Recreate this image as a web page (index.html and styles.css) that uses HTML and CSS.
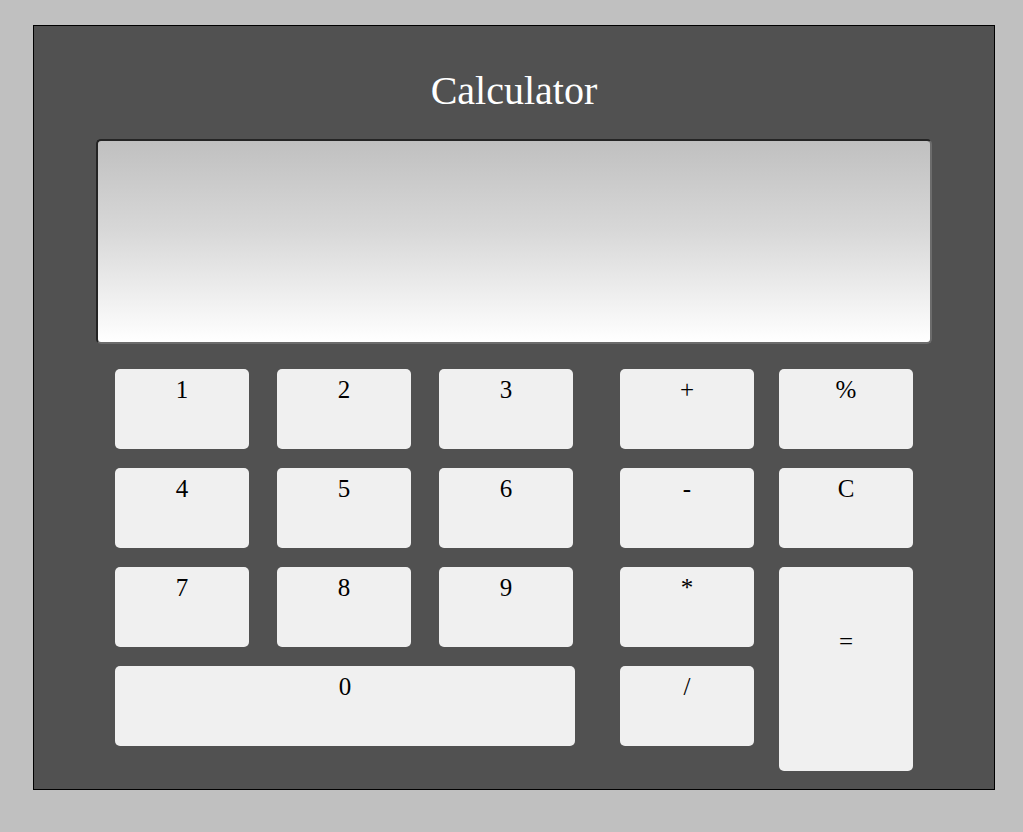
FILE: index.html
```html
<!DOCTYPE html>
<html>
<head>
<meta charset="utf-8">
<title>Calculator</title>
<link rel="stylesheet" href="styles.css">
</head>
<body>
<div class="calc">
  <h1 class="title">Calculator</h1>
  <div class="display"></div>
  <div class="keys">
    <div class="key">1</div>
    <div class="key">2</div>
    <div class="key">3</div>
    <div class="key">+</div>
    <div class="key">%</div>
    <div class="key">4</div>
    <div class="key">5</div>
    <div class="key">6</div>
    <div class="key">-</div>
    <div class="key">C</div>
    <div class="key">7</div>
    <div class="key">8</div>
    <div class="key">9</div>
    <div class="key">*</div>
    <div class="key key-eq">=</div>
    <div class="key key-zero">0</div>
    <div class="key">/</div>
  </div>
</div>
</body>
</html>
```

FILE: styles.css
```css
html, body {
  margin: 0;
  padding: 0;
}
body {
  background: #c0c0c0;
  font-family: "Liberation Serif", "Times New Roman", serif;
  padding: 25px 0 0 33px;
  height: 832px;
  box-sizing: border-box;
}
.calc {
  width: 960px;
  height: 763px;
  background: #515151;
  border: 1px solid #000;
  box-sizing: content-box;
}
.title {
  margin: 43px 0 0 0;
  font-size: 40px;
  line-height: 44px;
  font-weight: normal;
  color: #fff;
  text-align: center;
}
.display {
  margin: 26px 0 0 62px;
  width: 836px;
  height: 205px;
  box-sizing: border-box;
  border-style: solid;
  border-width: 2px;
  border-color: #242424 #6c6c6c #6c6c6c #242424;
  border-radius: 5px;
  background: linear-gradient(to bottom, #c0c0c0 0%, #d8d8d8 45%, #ffffff 100%);
}
.keys {
  margin: 25px 0 0 81px;
  display: grid;
  grid-template-columns: 162px 162px 181px 159px 134px;
  grid-template-rows: 80px 80px 80px 80px;
  row-gap: 19px;
}
.key {
  width: 134px;
  height: 80px;
  box-sizing: border-box;
  background: #f0f0f0;
  border-radius: 5px;
  color: #000;
  font-size: 25px;
  line-height: 28px;
  text-align: center;
  padding-top: 7px;
}
.key-zero {
  grid-column: 1 / span 3;
  width: 460px;
}
.key-eq {
  grid-column: 5;
  grid-row: 3 / span 2;
  height: 204px;
  padding-top: 61px;
}
```
